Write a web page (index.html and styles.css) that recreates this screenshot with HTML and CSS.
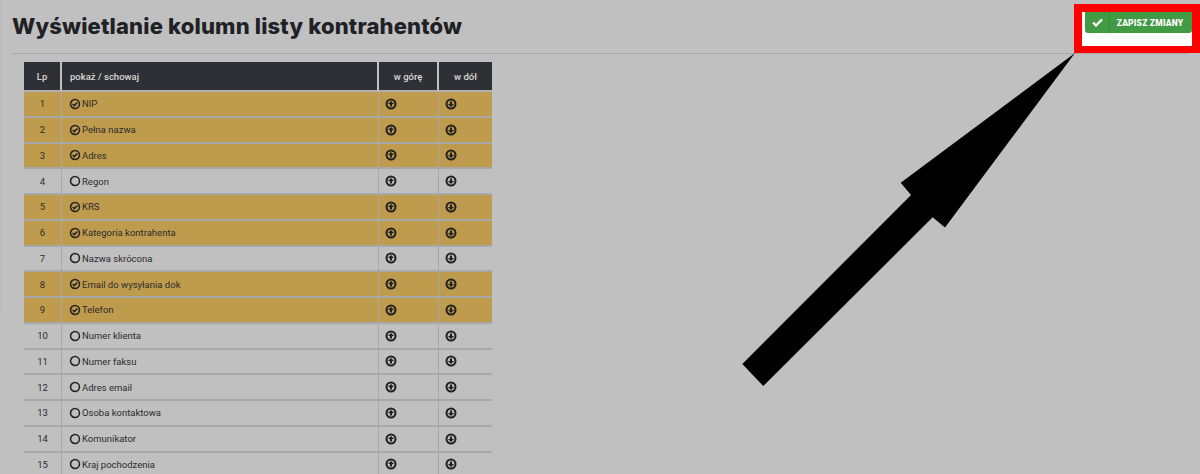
FILE: index.html
```html
<!DOCTYPE html>
<html lang="pl">
  <head>
    <meta charset="UTF-8" />
    <title>Wyświetlanie kolumn listy kontrahentów</title>
    <link rel="stylesheet" href="styles.css">
  </head>
  <body>
    <svg width="0" height="0" class="defs">
      <symbol id="i-on" viewBox="0.5 0.5 11 11">
        <circle cx="6" cy="6" r="4.1" fill="none" stroke="currentColor" stroke-width="1.4" />
        <path d="M3.9 6l1.5 1.5 2.8-2.8" fill="none" stroke="currentColor" stroke-width="1.4" />
      </symbol>
      <symbol id="i-off" viewBox="0.5 0.5 11 11">
        <circle cx="6" cy="6" r="4.1" fill="none" stroke="currentColor" stroke-width="1.4" />
      </symbol>
      <symbol id="i-up" viewBox="0.5 0.5 11 11">
        <circle cx="6" cy="6" r="4.1" fill="none" stroke="currentColor" stroke-width="1.9" />
        <path d="M6 3.2L8.8 6H7v2.4H5V6H3.2z" fill="currentColor" />
      </symbol>
      <symbol id="i-down" viewBox="0.5 0.5 11 11">
        <circle cx="6" cy="6" r="4.1" fill="none" stroke="currentColor" stroke-width="1.9" />
        <path d="M6 8.8L3.2 6H5V3.6h2V6h1.8z" fill="currentColor" />
      </symbol>
    </svg>

    <header class="top">
      <h1>Wyświetlanie kolumn listy kontrahentów</h1>
    </header>

    <table class="cols">
      <thead>
        <tr><th class="c-lp">Lp</th><th class="c-name">pokaż / schowaj</th><th class="c-up">w górę</th><th class="c-down">w dół</th></tr>
      </thead>
      <tbody id="rows"></tbody>
    </table>

    <div class="callout">
      <button class="save" type="button">
        <span class="save-icon">
          <svg width="11" height="9" viewBox="0 0 11 9"><path d="M1 4.5l3 3 6-6" fill="none" stroke="#fff" stroke-width="2.4" /></svg>
        </span>
        <span class="save-label">ZAPISZ ZMIANY</span>
      </button>
    </div>

    <svg class="arrow" width="1200" height="474" viewBox="0 0 1200 474">
      <polygon points="1075,53 945,227.5 932.7,217.3 763.3,386 742.3,364 911,195 900.7,182.7" />
    </svg>

    <script>
      const rows = [
        ['NIP', 1], ['Pełna nazwa', 1], ['Adres', 1], ['Regon', 0], ['KRS', 1],
        ['Kategoria kontrahenta', 1], ['Nazwa skrócona', 0], ['Email do wysyłania dok', 1],
        ['Telefon', 1], ['Numer klienta', 0], ['Numer faksu', 0], ['Adres email', 0],
        ['Osoba kontaktowa', 0], ['Komunikator', 0], ['Kraj pochodzenia', 0],
      ]
      const icon = (name) => `<svg class="ico"><use href="#i-${name}"></use></svg>`
      document.getElementById('rows').innerHTML = rows
        .map(([label, on], i) => `<tr class="${on ? 'on' : ''}">
          <td class="c-lp">${i + 1}</td>
          <td class="c-name"><span class="pick">${icon(on ? 'on' : 'off')}${label}</span></td>
          <td class="c-up">${icon('up')}</td>
          <td class="c-down">${icon('down')}</td>
        </tr>`)
        .join('')
    </script>
  </body>
</html>
```

FILE: styles.css
```css
html,
body {
  height: 474px;
  overflow: hidden;
}

body {
  margin: 0;
  background: #c0c0c0;
  color: #2b2b2b;
  font-family: Roboto, "Liberation Sans", sans-serif;
  font-size: 9.5px;
}

/* edge of the side panel behind the dimmed page */
body::before {
  content: "";
  position: absolute;
  top: 0;
  left: 1px;
  width: 1px;
  height: 312px;
  background: #b6b6b6;
}

.defs {
  position: absolute;
}

.top {
  margin: 0 12px;
  height: 54px;
  box-sizing: border-box;
  border-bottom: 1px solid #a9a9a9;
}

h1 {
  margin: 0;
  padding-top: 13px;
  font-family: Inter, Roboto, sans-serif;
  font-size: 22px;
  line-height: 27px;
  font-weight: 800;
  letter-spacing: 0.17px;
  color: #1f2126;
}

.cols {
  margin: 8px 0 0 24px;
  width: 468px;
  border-collapse: separate;
  border-spacing: 0;
  table-layout: fixed;
}

.cols th,
.cols td {
  box-sizing: border-box;
}

.cols th {
  height: 30px;
  padding: 0;
  background: #2f3036;
  color: #d8d8d8;
  font-weight: 500;
  font-size: 9.5px;
  border-right: 2px solid #c0c0c0;
  border-bottom: 2px solid #b0b0b0;
}

.cols th:last-child {
  border-right: 0;
}

.cols td {
  height: 25.75px;
  padding: 0;
  text-align: center;
  border-right: 1px solid #a8a8a8;
  border-bottom: 2px solid #a8a8a8;
}

.cols td:last-child {
  border-right: 0;
}

.on td {
  background: #bf9b4e;
}

.c-lp {
  width: 38px;
}

.c-up {
  width: 60px;
}

.c-down {
  width: 53px;
}

.cols th.c-name {
  text-align: left;
  padding-left: 8px;
}

.cols td.c-name {
  text-align: left;
  padding-left: 7px;
}

.cols td.c-up,
.cols td.c-down {
  text-align: left;
  padding-left: 6px;
}

.pick {
  display: flex;
  align-items: center;
  gap: 1px;
}

.ico {
  display: block;
  width: 12px;
  height: 12px;
  color: #222;
}

.callout {
  position: absolute;
  top: 4px;
  left: 1074px;
  width: 126px;
  height: 49px;
  box-sizing: border-box;
  border: 8px solid #fe0000;
  border-bottom-width: 7px;
  background: #fff;
}

.save {
  display: flex;
  align-items: stretch;
  width: 107px;
  height: 21px;
  margin: 0 0 0 3px;
  padding: 0;
  border: 0;
  border-radius: 0 0 3px 3px;
  background: #419a44;
  color: #fff;
  font-family: Roboto, "Liberation Sans", sans-serif;
}

.save-icon {
  display: flex;
  align-items: center;
  justify-content: center;
  width: 24px;
  border-right: 1px solid #368a3a;
}

.save-label {
  flex: 1;
  align-self: center;
  padding-right: 2px;
  font-size: 8.5px;
  font-weight: 900;
  letter-spacing: 0.2px;
}

.arrow {
  position: absolute;
  top: 0;
  left: 0;
  pointer-events: none;
}
```
